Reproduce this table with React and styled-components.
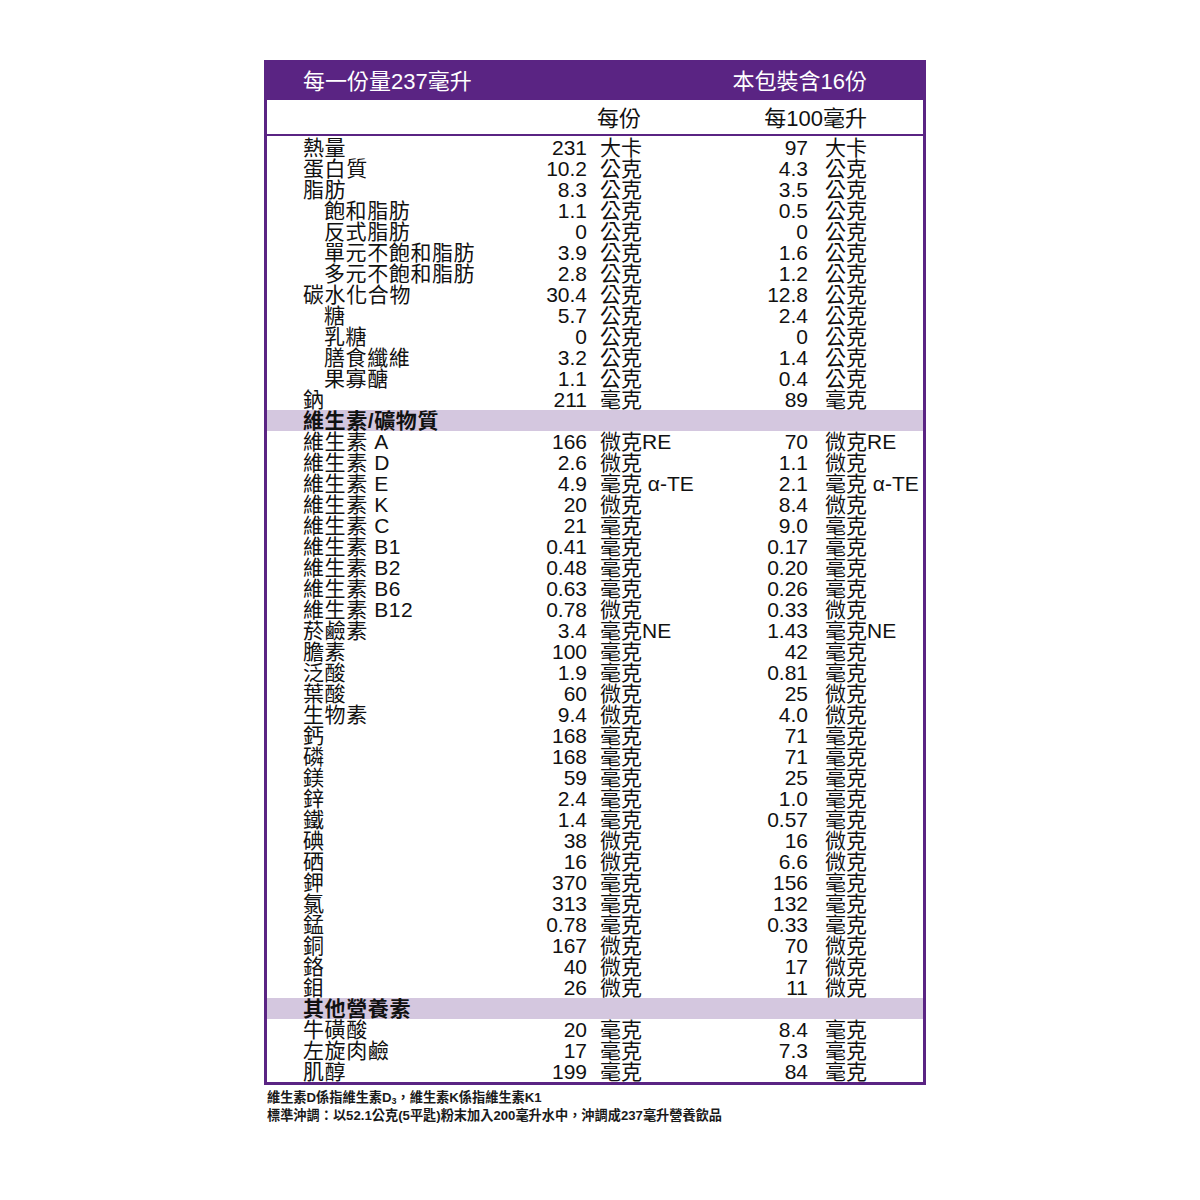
import React from 'react';
import styled, { createGlobalStyle } from 'styled-components';

const GlobalStyle = createGlobalStyle`
  html, body {
    margin: 0;
    padding: 0;
    background: #fff;
  }
  body {
    font-family: "Liberation Sans", "Noto Sans CJK TC", sans-serif;
    color: #111;
  }
`;

const PURPLE = '#5a2483';
const LAVENDER = '#d4c7df';

const Page = styled.div`
  width: 1200px;
  height: 1200px;
  box-sizing: border-box;
  padding: 60px 0 0 264px;
`;

const Panel = styled.div`
  width: 662px;
  box-sizing: border-box;
  border: 3px solid ${PURPLE};
  border-top: none;
`;

const TopBar = styled.div`
  height: 40px;
  background: ${PURPLE};
  margin: 0 -3px;
  padding: 4px 59px 0 39px;
  display: flex;
  align-items: center;
  justify-content: space-between;
  color: #fff;
  font-size: 22px;
  line-height: 22px;
  box-sizing: border-box;
`;

const ColHead = styled.div`
  height: 34px;
  display: flex;
  align-items: center;
  border-bottom: 2px solid ${PURPLE};
  font-size: 22px;
  line-height: 22px;
`;

const HeadCell = styled.div`
  width: ${p => p.$w}px;
  text-align: right;
  padding-top: 3px;
`;

const Body = styled.div`
  padding-top: 1px;
`;

const Row = styled.div`
  display: grid;
  grid-template-columns: 224px 60px 161px 60px 1fr;
  height: 21px;
  align-items: center;
  padding-left: 36px;
  font-size: 21px;
  line-height: 21px;
  white-space: nowrap;
  background: ${p => (p.$section ? LAVENDER : 'transparent')};
  font-weight: ${p => (p.$section ? 700 : 400)};
`;

const Label = styled.div`
  padding-left: ${p => (p.$indent ? 21 : 0)}px;
  letter-spacing: 0.6px;
  margin-top: -1px;
`;

const Num = styled.div`
  text-align: right;
`;

const Unit = styled.div`
  padding-left: ${p => p.$gap}px;
  margin-top: -1px;
`;

const Notes = styled.div`
  padding: 4px 0 0 3px;
  font-size: 13.2px;
  line-height: 18px;
  font-weight: 700;
  color: #1a1a1a;
`;

const Sub = styled.span`
  font-size: 9px;
  vertical-align: -2px;
  line-height: 0;
`;

const rows = [
  ['熱量', '231', '大卡', '97', '大卡'],
  ['蛋白質', '10.2', '公克', '4.3', '公克'],
  ['脂肪', '8.3', '公克', '3.5', '公克'],
  ['飽和脂肪', '1.1', '公克', '0.5', '公克', 1],
  ['反式脂肪', '0', '公克', '0', '公克', 1],
  ['單元不飽和脂肪', '3.9', '公克', '1.6', '公克', 1],
  ['多元不飽和脂肪', '2.8', '公克', '1.2', '公克', 1],
  ['碳水化合物', '30.4', '公克', '12.8', '公克'],
  ['糖', '5.7', '公克', '2.4', '公克', 1],
  ['乳糖', '0', '公克', '0', '公克', 1],
  ['膳食纖維', '3.2', '公克', '1.4', '公克', 1],
  ['果寡醣', '1.1', '公克', '0.4', '公克', 1],
  ['鈉', '211', '毫克', '89', '毫克'],
  ['§維生素/礦物質'],
  ['維生素 A', '166', '微克RE', '70', '微克RE'],
  ['維生素 D', '2.6', '微克', '1.1', '微克'],
  ['維生素 E', '4.9', '毫克 α-TE', '2.1', '毫克 α-TE'],
  ['維生素 K', '20', '微克', '8.4', '微克'],
  ['維生素 C', '21', '毫克', '9.0', '毫克'],
  ['維生素 B1', '0.41', '毫克', '0.17', '毫克'],
  ['維生素 B2', '0.48', '毫克', '0.20', '毫克'],
  ['維生素 B6', '0.63', '毫克', '0.26', '毫克'],
  ['維生素 B12', '0.78', '微克', '0.33', '微克'],
  ['菸鹼素', '3.4', '毫克NE', '1.43', '毫克NE'],
  ['膽素', '100', '毫克', '42', '毫克'],
  ['泛酸', '1.9', '毫克', '0.81', '毫克'],
  ['葉酸', '60', '微克', '25', '微克'],
  ['生物素', '9.4', '微克', '4.0', '微克'],
  ['鈣', '168', '毫克', '71', '毫克'],
  ['磷', '168', '毫克', '71', '毫克'],
  ['鎂', '59', '毫克', '25', '毫克'],
  ['鋅', '2.4', '毫克', '1.0', '毫克'],
  ['鐵', '1.4', '毫克', '0.57', '毫克'],
  ['碘', '38', '微克', '16', '微克'],
  ['硒', '16', '微克', '6.6', '微克'],
  ['鉀', '370', '毫克', '156', '毫克'],
  ['氯', '313', '毫克', '132', '毫克'],
  ['錳', '0.78', '毫克', '0.33', '毫克'],
  ['銅', '167', '微克', '70', '微克'],
  ['鉻', '40', '微克', '17', '微克'],
  ['鉬', '26', '微克', '11', '微克'],
  ['§其他營養素'],
  ['牛磺酸', '20', '毫克', '8.4', '毫克'],
  ['左旋肉鹼', '17', '毫克', '7.3', '毫克'],
  ['肌醇', '199', '毫克', '84', '毫克'],
];

export default function App() {
  return (
    <Page>
      <GlobalStyle />
      <Panel>
        <TopBar>
          <span>每一份量237毫升</span>
          <span>本包裝含16份</span>
        </TopBar>
        <ColHead>
          <HeadCell $w={374}>每份</HeadCell>
          <HeadCell $w={226}>每100毫升</HeadCell>
        </ColHead>
        <Body>
          {rows.map((r, i) => {
            if (r[0].startsWith('§')) {
              return (
                <Row key={i} $section>
                  <Label>{r[0].slice(1)}</Label>
                </Row>
              );
            }
            const [name, n1, u1, n2, u2, indent] = r;
            return (
              <Row key={i}>
                <Label $indent={indent}>{name}</Label>
                <Num>{n1}</Num>
                <Unit $gap={13}>{u1}</Unit>
                <Num>{n2}</Num>
                <Unit $gap={17}>{u2}</Unit>
              </Row>
            );
          })}
        </Body>
      </Panel>
      <Notes>
        <div>維生素D係指維生素D<Sub>3</Sub>，維生素K係指維生素K1</div>
        <div>標準沖調：以52.1公克(5平匙)粉末加入200毫升水中，沖調成237毫升營養飲品</div>
      </Notes>
    </Page>
  );
}
